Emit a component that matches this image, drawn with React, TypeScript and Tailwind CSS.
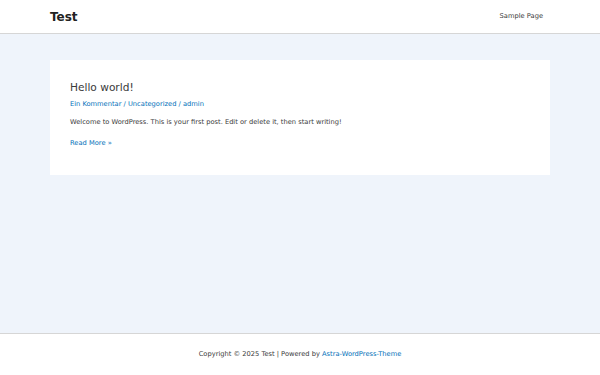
export default function App() {
  return (
    <div className="min-h-[375px] flex flex-col bg-[#eff4fb] text-[#3a3a3a]" style={{ fontFamily: '"DejaVu Sans", sans-serif' }}>
      <header className="h-[34px] bg-white border-b border-[#d6d6d6] flex items-center justify-between pl-[50px] pr-[57px]">
        <span className="text-[12px] font-bold text-[#222]">Test</span>
        <span className="text-[6.7px] text-[#3a3a3a]">Sample Page</span>
      </header>

      <main className="flex-1 px-[50px] pt-[26px]">
        <article className="bg-white px-[20px] pt-[20px] pb-[27px]">
          <h2 className="text-[10.6px] leading-[14px] text-[#3a3a3a]">Hello world!</h2>
          <div className="mt-[5px] text-[6.7px] leading-[10px] text-[#0170b9]">
            <a>Ein Kommentar</a> / <a>Uncategorized</a> / <a>admin</a>
          </div>
          <p className="mt-[8px] text-[6.7px] leading-[10px]">
            Welcome to WordPress. This is your first post. Edit or delete it, then start writing!
          </p>
          <p className="mt-[11px] text-[6.7px] leading-[10px] text-[#0170b9]">Read More »</p>
        </article>
      </main>

      <footer className="h-[42px] bg-white border-t border-[#d6d6d6] flex items-center justify-center text-[6.7px]">
        <span>
          Copyright © 2025 Test | Powered by <a className="text-[#0170b9]">Astra-WordPress-Theme</a>
        </span>
      </footer>
    </div>
  )
}
